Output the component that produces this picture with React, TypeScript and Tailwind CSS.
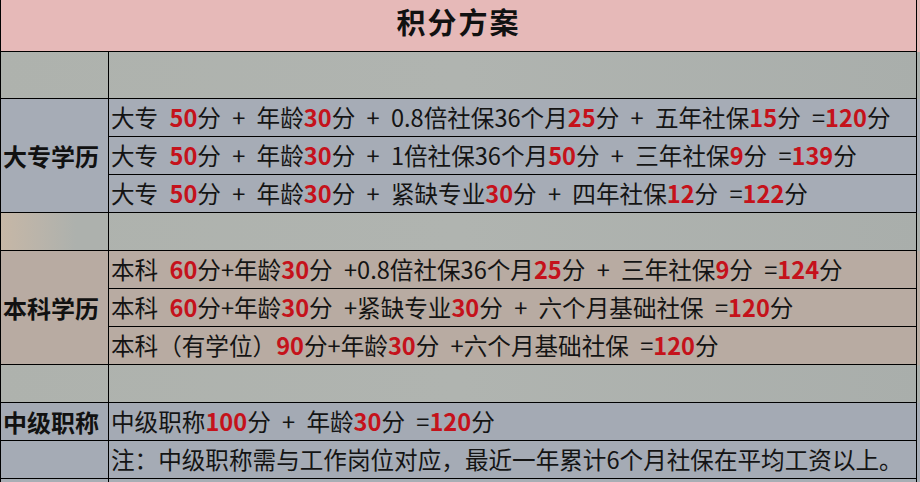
import React from "react";

const FONT = "font-['Microsoft_YaHei','Noto_Sans_CJK_SC',sans-serif]";

// red bold numbers are wrapped in {}
function rich(s: string) {
  return s.split(/\{(.*?)\}/).map((p, i) =>
    i % 2 ? (
      <span key={i} className="font-bold text-[#c5121b]">
        {p}
      </span>
    ) : (
      <React.Fragment key={i}>{p}</React.Fragment>
    )
  );
}

function Line({ text, last }: { text: string; last?: boolean }) {
  return (
    <div
      className={`flex items-center whitespace-pre pl-[2px] text-[23.6px] text-[#141414] [word-spacing:6px] ${
        last ? "h-[37px]" : "h-[38px] border-b border-black"
      }`}
    >
      <span>{rich(text)}</span>
    </div>
  );
}

function Band({
  label,
  lines,
  bg,
}: {
  label: string;
  lines: string[];
  bg: string;
}) {
  return (
    <div className={`flex w-[920px] ${bg}`}>
      <div className="flex w-[917px] border-b border-l border-r border-black">
        <div className="flex w-[108px] shrink-0 items-center border-r border-black pl-[2px] text-[24px] font-bold text-[#111]">
          {label}
        </div>
        <div className="flex flex-1 flex-col">
          {lines.map((l, i) => (
            <Line key={i} text={l} last={i === lines.length - 1} />
          ))}
        </div>
      </div>
    </div>
  );
}

function Spacer({ h, leftBg }: { h: string; leftBg?: string }) {
  return (
    <div className="flex w-[920px] bg-gradient-to-r from-[#aeb2ad] via-[#b0b4b0] to-[#a9aeab]">
      <div className={`flex w-[917px] border-b border-l border-r border-black ${h}`}>
        <div className={`w-[108px] shrink-0 border-r border-black ${leftBg ?? ""}`} />
        <div className="flex-1" />
      </div>
    </div>
  );
}

export default function App() {
  return (
    <div className={`h-[482px] w-[920px] overflow-hidden bg-[#a9aeb4] ${FONT}`}>
      {/* title */}
      <div className="flex w-[920px] bg-[#e6b9b8]">
        <div className="flex h-[52px] w-[917px] items-center justify-center border-b border-l border-r border-black pb-[8px] text-[29px] font-bold tracking-[2px] text-[#111]">
          积分方案
        </div>
      </div>

      <Spacer h="h-[47px]" />

      <Band
        label="大专学历"
        bg="bg-[#a6acb6]"
        lines={[
          "大专 {50}分 + 年龄{30}分 + 0.8倍社保36个月{25}分 + 五年社保{15}分 ={120}分",
          "大专 {50}分 + 年龄{30}分 + 1倍社保36个月{50}分 + 三年社保{9}分 ={139}分",
          "大专 {50}分 + 年龄{30}分 + 紧缺专业{30}分 + 四年社保{12}分 ={122}分",
        ]}
      />

      <Spacer
        h="h-[38px]"
        leftBg="bg-[linear-gradient(90deg,#c6b7a6_0%,#bab4aa_35%,#adb1ad_70%)]"
      />

      <Band
        label="本科学历"
        bg="bg-[#b8aba2]"
        lines={[
          "本科 {60}分+年龄{30}分 +0.8倍社保36个月{25}分 + 三年社保{9}分 ={124}分",
          "本科 {60}分+年龄{30}分 +紧缺专业{30}分 + 六个月基础社保 ={120}分",
          "本科（有学位）{90}分+年龄{30}分 +六个月基础社保 ={120}分",
        ]}
      />

      <Spacer h="h-[38px]" />

      <Band
        label="中级职称"
        bg="bg-[#a4aab4]"
        lines={["中级职称{100}分 + 年龄{30}分 ={120}分"]}
      />
      <Band
        label=""
        bg="bg-[#a5abb5]"
        lines={["注：中级职称需与工作岗位对应，最近一年累计6个月社保在平均工资以上。"]}
      />
      <div className="flex h-[10px] w-[920px] bg-[#a8aeb5]">
        <div className="w-[917px] border-l border-r border-black">
          <div className="h-full w-[108px] border-r border-black" />
        </div>
      </div>
    </div>
  );
}
